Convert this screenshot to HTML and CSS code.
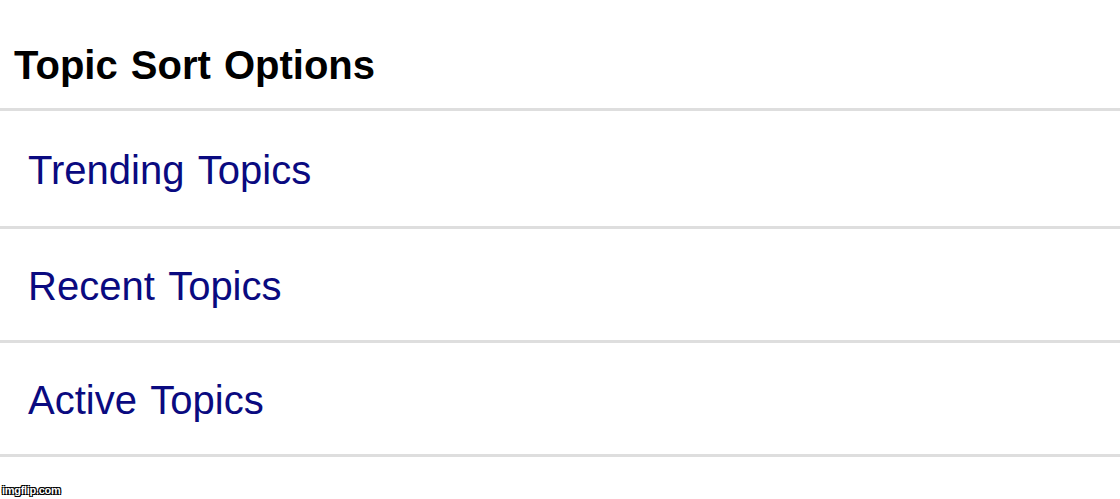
FILE: index.html
```html
<!DOCTYPE html>
<html lang="en">
<head>
    <meta charset="UTF-8">
    <meta name="viewport" content="width=device-width, initial-scale=1.0">
    <title>Topic Sort Options</title>
    <link rel="stylesheet" href="styles.css">
</head>
<body>
    <div class="sheet">
        <h1 class="sheet-title">Topic Sort Options</h1>
        <ul class="sort-list">
            <li class="sort-item"><a href="#">Trending Topics</a></li>
            <li class="sort-item"><a href="#">Recent Topics</a></li>
            <li class="sort-item"><a href="#">Active Topics</a></li>
        </ul>
    </div>
    <div class="watermark">imgflip.com</div>
</body>
</html>
```

FILE: styles.css
```css
* {
    margin: 0;
    padding: 0;
    box-sizing: border-box;
}

body {
    font-family: 'Liberation Sans', Arial, sans-serif;
    background: #ffffff;
    width: 1120px;
    height: 499px;
    overflow: hidden;
    position: relative;
}

.sheet-title {
    height: 111px;
    padding: 43px 0 0 14px;
    font-size: 40px;
    font-weight: 700;
    word-spacing: 2px;
    color: #000000;
    border-bottom: 3px solid #dedede;
}

.sort-list {
    list-style: none;
}

.sort-item {
    border-bottom: 3px solid #dedede;
}

.sort-item:first-child {
    height: 118px;
    padding-top: 37px;
}

.sort-item + .sort-item {
    height: 114px;
    padding-top: 35px;
}

.sort-item a {
    display: block;
    padding-left: 28px;
    font-size: 40px;
    word-spacing: 3px;
    color: #0a0a80;
    text-decoration: none;
}

.watermark {
    position: absolute;
    left: 2px;
    bottom: 3px;
    font-size: 11px;
    font-weight: 700;
    color: #ffffff;
    letter-spacing: -0.3px;
    text-shadow: 0 0 1px #000, 1px 1px 0 #000, -1px -1px 0 #000, 1px -1px 0 #000, -1px 1px 0 #000;
}
```
